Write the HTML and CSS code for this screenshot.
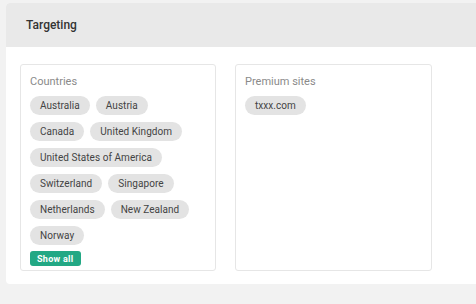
FILE: index.html
```html
<!DOCTYPE html>
<html lang="en">
<head>
  <meta charset="UTF-8" />
  <title>Targeting</title>
  <link rel="stylesheet" href="styles.css">
</head>
<body>
  <section class="panel">
    <header class="panel-head">
      <h2>Targeting</h2>
    </header>
    <div class="panel-body">
      <div class="box">
        <div class="box-label">Countries</div>
        <div class="chips">
          <span class="chip">Australia</span>
          <span class="chip">Austria</span>
          <span class="chip">Canada</span>
          <span class="chip">United Kingdom</span>
          <span class="chip">United States of America</span>
          <span class="chip">Switzerland</span>
          <span class="chip">Singapore</span>
          <span class="chip">Netherlands</span>
          <span class="chip">New Zealand</span>
          <span class="chip">Norway</span>
        </div>
        <button class="show-all">Show all</button>
      </div>
      <div class="box">
        <div class="box-label">Premium sites</div>
        <div class="chips">
          <span class="chip">txxx.com</span>
        </div>
      </div>
    </div>
  </section>
</body>
</html>
```
FILE: styles.css
```css
body {
  margin: 0;
  padding: 3px 0 0 6px;
  background-color: #f2f2f2;
  font-family: Roboto, "Liberation Sans", sans-serif;
  overflow: hidden;
}
.panel {
  width: 470px;
  background: white;
  border-radius: 4px 0 0 4px;
}
.panel-head {
  background-color: #e9e9e9;
  height: 44px;
  display: flex;
  align-items: center;
  padding-left: 20px;
  border-radius: 4px 0 0 0;
}
.panel-head h2 {
  margin: 0;
  font-size: 12px;
  font-weight: 500;
  color: #333;
}
.panel-body {
  display: flex;
  align-items: stretch;
  gap: 19px;
  padding: 17px 14px 13px;
}
.box {
  width: 176px;
  border: 1px solid #e6e6e6;
  border-radius: 3px;
  padding: 10px 9px 4px 9px;
}
.box + .box {
  width: 177px;
}
.box-label {
  font-size: 11px;
  color: #8a8a8a;
  line-height: 13px;
  margin-bottom: 8px;
}
.chips {
  display: flex;
  flex-wrap: wrap;
  gap: 7px 6px;
}
.chip {
  background-color: #e3e3e3;
  color: #444;
  font-size: 10px;
  letter-spacing: 0.05px;
  line-height: 19px;
  height: 19px;
  padding: 0 10px;
  border-radius: 10px;
}
.show-all {
  display: block;
  margin-top: 6px;
  background-color: #22a884;
  color: white;
  border: none;
  border-radius: 3px;
  font-family: inherit;
  font-size: 9px;
  font-weight: 700;
  letter-spacing: 0.3px;
  height: 15px;
  padding: 0 7px;
  cursor: pointer;
}
```
